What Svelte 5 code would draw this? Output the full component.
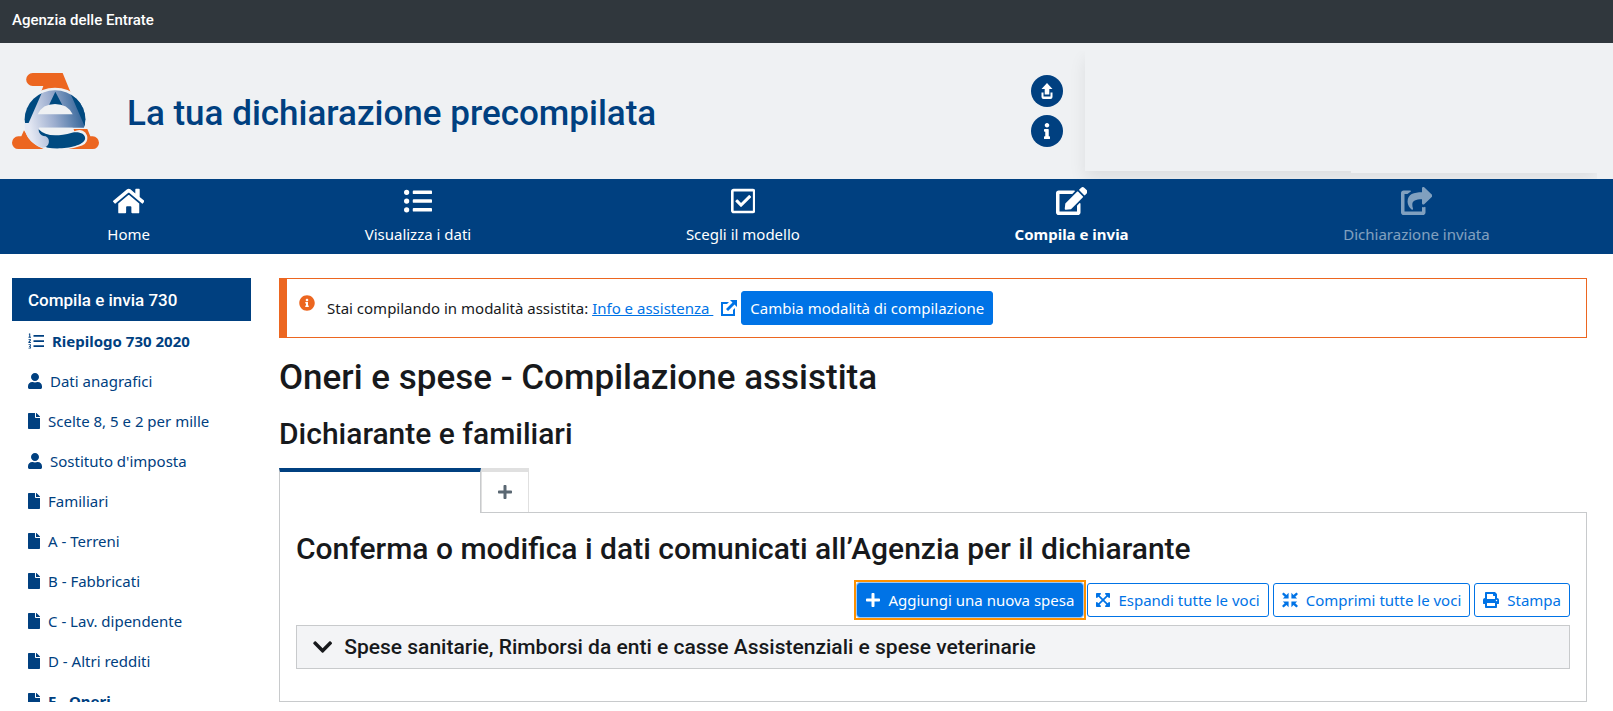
<script lang="ts">
  type Icon = { box: string; d: string };

  const icons: Record<string, Icon> = {
    home: { box: '0 0 576 512', d: 'M280.37 148.26L96 300.11V464a16 16 0 0 0 16 16l112.06-.29a16 16 0 0 0 15.92-16V368a16 16 0 0 1 16-16h64a16 16 0 0 1 16 16v95.64a16 16 0 0 0 16 16.05L464 480a16 16 0 0 0 16-16V300L295.67 148.26a12.19 12.19 0 0 0-15.3 0zM571.6 251.47L488 182.56V44.05a12 12 0 0 0-12-12h-56a12 12 0 0 0-12 12v72.61L318.47 43a48 48 0 0 0-61 0L4.34 251.47a12 12 0 0 0-1.6 16.9l25.5 31A12 12 0 0 0 45.15 301l235.22-193.74a12.19 12.19 0 0 1 15.3 0L530.9 301a12 12 0 0 0 16.9-1.6l25.5-31a12 12 0 0 0-1.7-16.93z' },
    list: { box: '0 0 512 512', d: 'M48 48a48 48 0 1 0 48 48 48 48 0 0 0-48-48zm0 160a48 48 0 1 0 48 48 48 48 0 0 0-48-48zm0 160a48 48 0 1 0 48 48 48 48 0 0 0-48-48zm448 16H176a16 16 0 0 0-16 16v32a16 16 0 0 0 16 16h320a16 16 0 0 0 16-16v-32a16 16 0 0 0-16-16zm0-320H176a16 16 0 0 0-16 16v32a16 16 0 0 0 16 16h320a16 16 0 0 0 16-16V80a16 16 0 0 0-16-16zm0 160H176a16 16 0 0 0-16 16v32a16 16 0 0 0 16 16h320a16 16 0 0 0 16-16v-32a16 16 0 0 0-16-16z' },
    check: { box: '0 0 448 512', d: 'M400 32H48C21.49 32 0 53.49 0 80v352c0 26.51 21.49 48 48 48h352c26.51 0 48-21.49 48-48V80c0-26.51-21.49-48-48-48zm0 400H48V80h352v352zm-35.864-241.724L191.547 361.48c-4.705 4.667-12.303 4.637-16.97-.068l-90.781-91.516c-4.667-4.705-4.637-12.303.069-16.971l22.719-22.536c4.705-4.667 12.303-4.637 16.97.069l59.792 60.277 141.352-140.216c4.705-4.667 12.303-4.637 16.97.068l22.536 22.718c4.667 4.706 4.637 12.304-.068 16.971z' },
    edit: { box: '0 0 576 512', d: 'M402.6 83.2l90.2 90.2c3.8 3.8 3.8 10 0 13.8L274.4 405.6l-92.8 10.3c-12.4 1.4-22.9-9.1-21.5-21.5l10.3-92.8L388.8 83.2c3.8-3.8 10-3.8 13.8 0zm162-22.9l-48.8-48.8c-15.2-15.2-39.9-15.2-55.2 0l-35.4 35.4c-3.8 3.8-3.8 10 0 13.8l90.2 90.2c3.8 3.8 10 3.8 13.8 0l35.4-35.4c15.2-15.3 15.2-40 0-55.2zM384 346.2V448H64V128h229.8c3.2 0 6.2-1.3 8.5-3.5l40-40c7.6-7.6 2.2-20.5-8.5-20.5H48C21.5 64 0 85.5 0 112v352c0 26.5 21.5 48 48 48h352c26.5 0 48-21.5 48-48V306.2c0-10.7-12.9-16-20.5-8.5l-40 40c-2.2 2.3-3.5 5.3-3.5 8.5z' },
    share: { box: '0 0 576 512', d: 'M568.482 177.448L424.479 313.433C409.3 327.768 384 317.14 384 295.985v-71.963c-144.575.97-205.566 35.113-164.775 171.353 4.483 14.973-12.846 26.567-25.006 17.33C155.252 383.105 120 326.488 120 269.339c0-143.937 117.599-172.5 264-173.312V24.012c0-21.174 25.317-31.768 40.479-17.448l144.003 135.988c10.02 9.463 10.028 25.425 0 34.896zM384 379.128V448H64V128h50.916a11.99 11.99 0 0 0 8.648-3.693c14.953-15.568 32.237-27.89 51.014-37.676C185.708 80.83 181.584 64 169.033 64H48C21.49 64 0 85.49 0 112v352c0 26.51 21.49 48 48 48h352c26.51 0 48-21.49 48-48v-88.806c0-8.288-8.197-14.066-16.011-11.302a71.83 71.83 0 0 1-34.189 3.377c-7.27-1.046-13.8 4.514-13.8 11.859z' },
    user: { box: '0 0 448 512', d: 'M224 256c70.7 0 128-57.3 128-128S294.7 0 224 0 96 57.3 96 128s57.3 128 128 128zm89.6 32h-16.7c-22.2 10.2-46.9 16-72.9 16s-50.6-5.8-72.9-16h-16.7C60.2 288 0 348.2 0 422.4V464c0 26.5 21.5 48 48 48h352c26.5 0 48-21.5 48-48v-41.6c0-74.2-60.2-134.4-134.4-134.4z' },
    file: { box: '0 0 384 512', d: 'M224 136V0H24C10.7 0 0 10.7 0 24v464c0 13.3 10.7 24 24 24h336c13.3 0 24-10.7 24-24V160H248c-13.2 0-24-10.8-24-24zm160-14.1v6.1H256V0h6.1c6.4 0 12.5 2.5 17 7l97.9 98c4.5 4.5 7 10.6 7 16.9z' },
    ordered: { box: '0 0 512 512', d: 'M176 64h336v56H176zM176 228h336v56H176zM176 392h336v56H176zM32 16h40v104h24v28H16v-28h24V48H24zM16 188h72v56l-36 44h40v28H12v-28l44-56v-16H16zM16 356h76v52l-16 16 16 16v56H16v-28h44v-28H32v-28h28v-28H16z' },
    infoCircle: { box: '0 0 512 512', d: 'M256 8C119.043 8 8 119.083 8 256c0 136.997 111.043 248 248 248s248-111.003 248-248C504 119.083 392.957 8 256 8zm0 110c23.196 0 42 18.804 42 42s-18.804 42-42 42-42-18.804-42-42 18.804-42 42-42zm56 254c0 6.627-5.373 12-12 12h-88c-6.627 0-12-5.373-12-12v-24c0-6.627 5.373-12 12-12h12v-64h-12c-6.627 0-12-5.373-12-12v-24c0-6.627 5.373-12 12-12h64c6.627 0 12 5.373 12 12v100h12c6.627 0 12 5.373 12 12v24z' },
    info: { box: '0 0 192 512', d: 'M20 424.229h20V279.771H20c-11.046 0-20-8.954-20-20V212c0-11.046 8.954-20 20-20h112c11.046 0 20 8.954 20 20v212.229h20c11.046 0 20 8.954 20 20V492c0 11.046-8.954 20-20 20H20c-11.046 0-20-8.954-20-20v-47.771c0-11.046 8.954-20 20-20zM96 0C56.235 0 24 32.235 24 72s32.235 72 72 72 72-32.235 72-72S135.764 0 96 0z' },
    upload: { box: '0 0 16 16', d: 'M8 0l5.500 6H10.300v5.500H5.700V6H2.500zM2.500 9.500h2v4h7v-4h2V14a2 2 0 0 1-2 2h-7a2 2 0 0 1-2-2z' },
    external: { box: '0 0 16 16', d: 'M9 0h7v7l-2.500-2.500-6.500 6.500-2-2 6.500-6.500zM0 2h8L6 4H2v10h10v-4l2-2v8H0z' },
    plus: { box: '0 0 448 512', d: 'M416 208H272V64c0-17.67-14.33-32-32-32h-32c-17.67 0-32 14.33-32 32v144H32c-17.67 0-32 14.33-32 32v32c0 17.67 14.33 32 32 32h144v144c0 17.67 14.33 32 32 32h32c17.67 0 32-14.33 32-32V304h144c17.67 0 32-14.33 32-32v-32c0-17.67-14.33-32-32-32z' },
    expand: { box: '0 0 448 512', d: 'M448 344v112a23.94 23.94 0 0 1-24 24H312c-21.39 0-32.09-25.9-17-41l36.2-36.2L224 295.6 116.77 402.9 153 439c15.09 15.1 4.39 41-17 41H24a23.94 23.94 0 0 1-24-24V344c0-21.4 25.89-32.1 41-17l36.19 36.2L184.46 256 77.18 148.7 41 185c-15.1 15.1-41 4.4-41-17V56a23.94 23.94 0 0 1 24-24h112c21.39 0 32.09 25.9 17 41l-36.2 36.2L224 216.4l107.23-107.3L295 73c-15.09-15.1-4.39-41 17-41h112a23.94 23.94 0 0 1 24 24v112c0 21.4-25.89 32.1-41 17l-36.19-36.2L263.54 256l107.28 107.3L407 327.1c15.1-15.2 41-4.5 41 16.9z' },
    compress: { box: '0 0 16 16', d: 'M6.600 .8v5.800H.8l1.900-1.900L0 2l1.600-1.600 2.900 2.500zM9.400 .8v5.800h5.800l-1.900-1.900L16 2 14.400.4l-2.900 2.500zM6.600 15.200V9.400H.8l1.900 1.900L0 14l1.600 1.600 2.900-2.500zM9.400 15.200V9.400h5.800l-1.900 1.900L16 14l-1.600 1.600-2.900-2.500z' },
    print: { box: '0 0 512 512', d: 'M448 192V77.25c0-8.49-3.37-16.62-9.37-22.63L393.37 9.37c-6-6-14.14-9.37-22.63-9.37H96C78.33 0 64 14.33 64 32v160c-35.35 0-64 28.65-64 64v112c0 8.84 7.16 16 16 16h48v96c0 17.67 14.33 32 32 32h320c17.67 0 32-14.33 32-32v-96h48c8.84 0 16-7.16 16-16V256c0-35.35-28.65-64-64-64zm-64 256H128v-96h256v96zm0-224H128V64h192v48c0 8.84 7.16 16 16 16h48v96zm48 72c-13.25 0-24-10.75-24-24 0-13.26 10.75-24 24-24s24 10.74 24 24c0 13.25-10.75 24-24 24z' },
    chevron: { box: '0 0 448 512', d: 'M207.029 381.476L12.686 187.132c-9.373-9.373-9.373-24.569 0-33.941l22.667-22.667c9.357-9.357 24.522-9.375 33.901-.04L224 284.505l154.745-154.021c9.379-9.335 24.544-9.317 33.901.04l22.667 22.667c9.373 9.373 9.373 24.569 0 33.941L240.971 381.476c-9.373 9.372-24.569 9.372-33.942 0z' },
  };

  const steps = [
    { label: 'Home', icon: 'home' },
    { label: 'Visualizza i dati', icon: 'list' },
    { label: 'Scegli il modello', icon: 'check' },
    { label: 'Compila e invia', icon: 'edit', active: true },
    { label: 'Dichiarazione inviata', icon: 'share', disabled: true },
  ];

  const sections = [
    { label: 'Riepilogo 730 2020', icon: 'ordered', strong: true },
    { label: 'Dati anagrafici', icon: 'user' },
    { label: 'Scelte 8, 5 e 2 per mille', icon: 'file' },
    { label: "Sostituto d'imposta", icon: 'user' },
    { label: 'Familiari', icon: 'file' },
    { label: 'A - Terreni', icon: 'file' },
    { label: 'B - Fabbricati', icon: 'file' },
    { label: 'C - Lav. dipendente', icon: 'file' },
    { label: 'D - Altri redditi', icon: 'file' },
    { label: 'E - Oneri', icon: 'file', strong: true },
  ];

  let open = $state(false);
</script>

{#snippet icon(name: string)}
  <svg class="icon {name}" viewBox={icons[name].box} aria-hidden="true"><path d={icons[name].d} /></svg>
{/snippet}

<div class="topbar"><a href="#agenzia">Agenzia delle Entrate</a></div>

<header>
  <div class="brand">
    <svg class="logo" viewBox="0 0 261 228" aria-hidden="true">
      <defs>
        <linearGradient id="sheen" gradientUnits="userSpaceOnUse" x1="50" y1="150" x2="215" y2="115">
          <stop offset="0" stop-color="#e4e8f3" />
          <stop offset="0.45" stop-color="#9daecf" />
          <stop offset="1" stop-color="#2f6297" />
        </linearGradient>
        <clipPath id="disc"><ellipse cx="129" cy="139" rx="91" ry="87" /></clipPath>
      </defs>
      <path fill="#ec6620" d="M62 0h90l27 66H84l10-27H62a19 19 0 0 1 0-39z" />
      <path fill="#ec6620" d="M36 172l-8 18h-9a19 19 0 0 0 0 38h78z" />
      <ellipse cx="129" cy="139" rx="98" ry="95" fill="#eff1f3" />
      <path fill="#ec6620" d="M184 168h42l9 22h7a19 19 0 0 1 0 38h-72l30-26z" />
      <g clip-path="url(#disc)">
        <path fill="url(#sheen)" d="M30 45h200v119H80q4 22 26 30 14 32-16 34-60-20-60-80z" />
        <path fill="#004a80" d="M0 40h98L42 168H0zM166 40l54 124h41V40zM130 56l-20 42h42z" />
      </g>
      <path fill="#eff1f3" d="M77 124q14-31 52-31t53 31z" />
      <path fill="none" stroke="#eff1f3" stroke-width="48" stroke-linecap="round" d="M112 205q48 5 90-10" />
      <path fill="#eff1f3" d="M82 164h100l8 20-80 10q-25-10-28-30z" />
      <path fill="#004a80" d="M80 169q28 30 100 10c24-4 42 4 39 20-6 22-70 32-112 25-26-8-32-34-27-55z" />
      <path fill="url(#sheen)" d="M38 150q-3 55 52 74c22 2 28-26 11-34-18-1-27-18-21-40z" />
    </svg>
    <span class="title">La tua dichiarazione precompilata</span>
  </div>
  <div class="tools">
    <button type="button" aria-label="Esci">{@render icon('upload')}</button>
    <button type="button" aria-label="Informazioni">{@render icon('info')}</button>
  </div>
  <div class="profile"></div>
</header>

<nav class="steps">
  {#each steps as step}
    <a href="#passo" class:active={step.active} class:disabled={step.disabled}>
      {@render icon(step.icon)}
      <span>{step.label}</span>
    </a>
  {/each}
</nav>

<div class="page">
  <aside>
    <h2>Compila e invia 730</h2>
    <ul>
      {#each sections as section}
        <li class:strong={section.strong}>
          <a href="#quadro">{@render icon(section.icon)}{section.label}</a>
        </li>
      {/each}
    </ul>
  </aside>

  <main>
    <div class="alert">
      {@render icon('infoCircle')}
      <p>Stai compilando in modalità assistita: <a href="#info">Info e assistenza&nbsp;</a></p>
      {@render icon('external')}
      <button type="button" class="btn primary">Cambia modalità di compilazione</button>
    </div>

    <h1>Oneri e spese - Compilazione assistita</h1>
    <h2>Dichiarante e familiari</h2>

    <div class="tabs" role="tablist">
      <button type="button" role="tab" class="tab current" aria-selected="true" aria-label="Dichiarante"></button>
      <button type="button" role="tab" class="tab" aria-selected="false" aria-label="Aggiungi familiare">{@render icon('plus')}</button>
    </div>

    <section class="panel">
      <h3>Conferma o modifica i dati comunicati all’Agenzia per il dichiarante</h3>
      <div class="actions">
        <button type="button" class="btn primary focused">{@render icon('plus')}Aggiungi una nuova spesa</button>
        <button type="button" class="btn" onclick={() => (open = true)}>{@render icon('expand')}Espandi tutte le voci</button>
        <button type="button" class="btn" onclick={() => (open = false)}>{@render icon('compress')}Comprimi tutte le voci</button>
        <button type="button" class="btn">{@render icon('print')}Stampa</button>
      </div>
      <button type="button" class="accordion" aria-expanded={open} onclick={() => (open = !open)}>
        {@render icon('chevron')}Spese sanitarie, Rimborsi da enti e casse Assistenziali e spese veterinarie
      </button>
    </section>
  </main>
</div>

<style>
  :global(body) {
    margin: 0;
    background: #fff;
    color: #17191c;
    font: 15px/24px 'Noto Sans', 'Open Sans', sans-serif;
  }
  button { font: inherit; cursor: pointer; }
  a { color: inherit; text-decoration: none; }
  h1, h2, h3, .title, .topbar, .accordion { font-family: Roboto, sans-serif; font-weight: 500; }
  h1, h2, h3, p, ul { margin: 0; padding: 0; }
  .icon { display: block; flex: none; height: 16px; fill: currentColor; }

  .topbar {
    padding: 8px 12px 11px;
    background: #30373d;
    color: #fff;
    font-size: 15px;
  }

  header {
    display: grid;
    grid-template-columns: 1fr 32px 512px;
    gap: 22px;
    align-items: center;
    height: 136px;
    padding: 0 16px 0 12px;
    box-sizing: border-box;
    background: #eff1f3;
    overflow: hidden;
  }
  .brand { display: flex; align-items: center; gap: 28px; }
  .logo { width: 87px; height: 76px; }
  .title { padding-top: 5px; color: #004080; font-size: 35px; line-height: 44px; }
  .tools { display: grid; gap: 8px; }
  .tools button {
    display: grid;
    place-items: center;
    width: 32px;
    height: 32px;
    padding: 0;
    border: 0;
    border-radius: 50%;
    background: #004080;
    color: #fff;
  }
  .profile {
    position: relative;
    height: 120px;
    background: #eff1f3;
    box-shadow: 0 8px 16px rgba(0, 0, 0, 0.08);
    clip-path: inset(0 0 -16px -16px);
  }
  .profile::after {
    content: '';
    position: absolute;
    inset: 100% 0 -2px 52%;
    background: #eff1f3;
  }

  .steps {
    display: flex;
    padding-right: 16px;
    background: #004080;
    color: #fff;
  }
  .steps a {
    display: grid;
    flex: 1 1 auto;
    justify-items: center;
    gap: 7px;
    padding: 8px 0;
  }
  .steps .icon { height: 28px; }
  .active { font-weight: 700; }
  .disabled { opacity: 0.5; }

  .page {
    display: grid;
    grid-template-columns: 239px 1fr;
    gap: 28px;
    padding: 24px 26px 9px 12px;
  }
  aside { color: #004080; contain: size; overflow: hidden; }
  aside h2 {
    padding: 10px 16px 9px;
    background: #004080;
    color: #fff;
    font-size: 17px;
    line-height: 24px;
  }
  aside ul { list-style: none; }
  aside a {
    display: flex;
    align-items: center;
    gap: 8px;
    padding: 8px 16px;
  }
  .strong { font-weight: 700; }

  .alert {
    display: flex;
    align-items: center;
    padding: 12px 8px;
    border: 1px solid #ec6620;
    border-left-width: 8px;
  }
  .alert p { margin: 0 8px 0 12px; }
  .alert a { color: #0073e6; text-decoration: underline; }
  .infoCircle { align-self: flex-start; margin-left: 4px; margin-top: 4px; color: #ec6620; }
  .external { margin-right: 4px; color: #0073e6; }

  main h1 { margin-top: 16px; font-size: 35px; line-height: 48px; }
  main h2 { margin-top: 12px; font-size: 30px; line-height: 40px; }

  .btn {
    display: inline-flex;
    align-items: center;
    gap: 8px;
    height: 34px;
    padding: 0 8px;
    border: 1px solid #0073e6;
    border-radius: 3px;
    background: #fff;
    color: #0073e6;
  }
  .primary { background: #0073e6; color: #fff; }
  .focused { position: relative; box-shadow: 0 0 0 1px #99c7f5; }
  .focused::after {
    content: '';
    position: absolute;
    inset: -4px;
    border: 2px solid #ff9100;
  }

  .tabs { display: flex; margin-top: 14px; }
  .tab {
    width: 48px;
    height: 44px;
    padding: 0 16px;
    border: 1px solid #e0e0e0;
    border-top: 4px solid #e0e0e0;
    border-bottom: 0;
    background: #fff;
    color: #5a6772;
  }
  .current {
    position: relative;
    z-index: 1;
    width: 202px;
    height: 45px;
    margin-bottom: -1px;
    border-color: #c8cacc;
    border-top-color: #004080;
  }

  .panel { padding: 16px 16px 32px; border: 1px solid #c8cacc; }
  h3 { font-size: 30px; line-height: 40px; }
  .actions { display: flex; justify-content: flex-end; gap: 4px; margin: 14px 0 8px; }
  .accordion {
    display: flex;
    align-items: center;
    gap: 12px;
    width: 100%;
    height: 44px;
    padding: 0 16px;
    border: 1px solid #c8cacc;
    background: #f3f4f6;
    color: #17191c;
    font-size: 21px;
    text-align: left;
  }
  .chevron { height: 22px; }
</style>
